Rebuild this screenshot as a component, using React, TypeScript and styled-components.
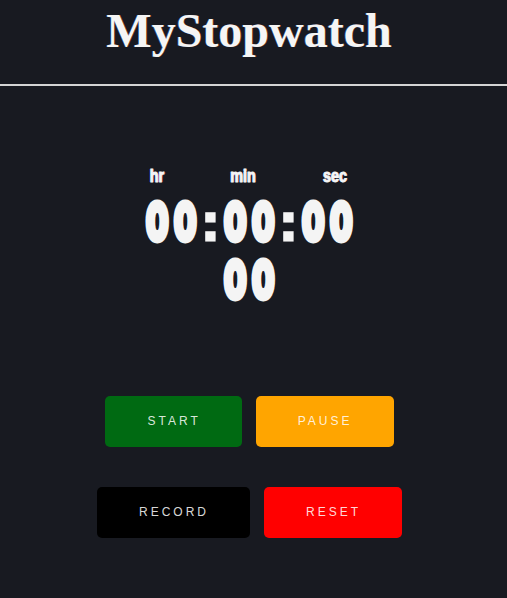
import React from "react";
import styled, { createGlobalStyle } from "styled-components";

const Global = createGlobalStyle`
  html, body {
    margin: 0;
    padding: 0;
    background: #181a21;
  }
  body {
    font-family: "Liberation Sans", Arial, sans-serif;
    color: #f4f4f4;
  }
`;

const Page = styled.div`
  display: flex;
  flex-direction: column;
  min-height: 598px;
  background: #181a21;
`;

const Header = styled.header`
  height: 84px;
  box-sizing: content-box;
  border-bottom: 2px solid #d4d4d4;
  padding-right: 9px;
  display: flex;
  justify-content: center;
`;

const Title = styled.h1`
  margin: 0;
  padding-top: 3px;
  font-family: "Liberation Serif", "Times New Roman", serif;
  font-weight: 700;
  font-size: 48px;
  line-height: 55px;
  color: #f5f5f5;
  text-shadow: -0.6px 0 rgba(70, 150, 255, 0.45), 0.6px 0 rgba(255, 110, 20, 0.45);
`;

const Main = styled.main`
  display: flex;
  flex-direction: column;
  align-items: center;
  padding: 81px 8px 0 0;
`;

const LabelRow = styled.div`
  display: flex;
  gap: 61px;
  height: 18px;
  margin-right: 1px;
`;

const Label = styled.span`
  display: inline-block;
  font: 700 18px/1 "Liberation Sans", Arial, sans-serif;
  color: #f4f4f4;
  -webkit-text-stroke: 1px #f4f4f4;
  transform: scaleX(0.8);
  text-shadow: -1px 0 rgba(70, 150, 255, 0.7), 1px 0 rgba(255, 100, 120, 0.6);
`;

const TimeRow = styled.div<{ $top: number }>`
  display: flex;
  align-items: flex-start;
  justify-content: center;
  gap: 9px;
  height: 53px;
  margin-top: ${(p) => p.$top}px;
`;

const Group = styled.div`
  width: 50px;
  display: flex;
  justify-content: space-between;
`;

const Cell = styled.span<{ $w: number }>`
  width: ${(p) => p.$w}px;
  display: flex;
  justify-content: center;
  overflow: visible;
`;

const Glyph = styled.span`
  display: inline-block;
  font: 900 51px/1 Inter, "Liberation Sans", Arial, sans-serif;
  color: #f4f4f4;
  -webkit-text-stroke: 5px #f4f4f4;
  transform: scaleX(0.62);
  text-shadow: -2px 0 rgba(60, 140, 255, 0.75), 2px 0 rgba(255, 110, 20, 0.75);
`;

const ColonGlyph = styled.span`
  display: inline-block;
  font: 700 52px/1 "Liberation Sans", Arial, sans-serif;
  color: #f4f4f4;
  -webkit-text-stroke: 3px #f4f4f4;
  text-shadow: -1px 0 rgba(60, 140, 255, 0.75), 1px 0 rgba(255, 110, 20, 0.75);
`;

const ButtonRow = styled.div<{ $top: number }>`
  display: flex;
  gap: 14px;
  margin-top: ${(p) => p.$top}px;
`;

const Button = styled.button<{ $bg: string }>`
  background: ${(p) => p.$bg};
  border: none;
  border-radius: 5px;
  padding: 18px 41px 18px 42px;
  font: 400 12px/15px "Liberation Sans", Arial, sans-serif;
  letter-spacing: 3px;
  color: rgba(255, 255, 255, 0.86);
  text-transform: uppercase;
  cursor: pointer;
`;

const Digits = ({ value }: { value: string }) => (
  <Group>
    {value.split("").map((d, i) => (
      <Cell key={i} $w={22}>
        <Glyph>{d}</Glyph>
      </Cell>
    ))}
  </Group>
);

const Colon = () => (
  <Cell $w={10}>
    <ColonGlyph>:</ColonGlyph>
  </Cell>
);

export default function App() {
  return (
    <Page>
      <Global />
      <Header>
        <Title>MyStopwatch</Title>
      </Header>
      <Main>
        <LabelRow>
          <Label>hr</Label>
          <Label>min</Label>
          <Label>sec</Label>
        </LabelRow>
        <TimeRow $top={11}>
          <Digits value="00" />
          <Colon />
          <Digits value="00" />
          <Colon />
          <Digits value="00" />
        </TimeRow>
        <TimeRow $top={5}>
          <Digits value="00" />
        </TimeRow>
        <ButtonRow $top={89}>
          <Button $bg="#006a12">Start</Button>
          <Button $bg="#ffa500">Pause</Button>
        </ButtonRow>
        <ButtonRow $top={40}>
          <Button $bg="#000000">Record</Button>
          <Button $bg="#ff0000">Reset</Button>
        </ButtonRow>
      </Main>
    </Page>
  );
}
